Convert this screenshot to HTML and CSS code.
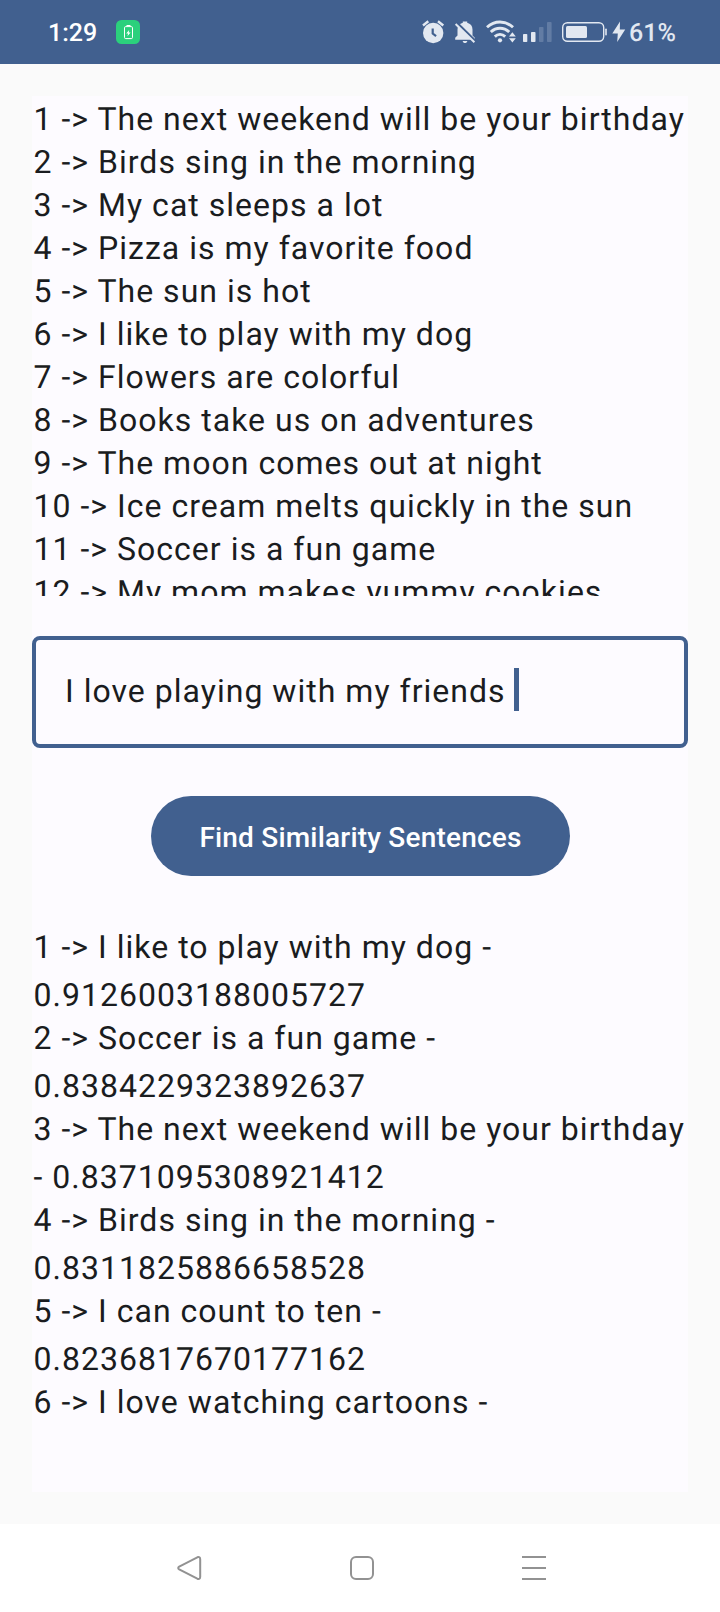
FILE: index.html
```
<!DOCTYPE html>
<html lang="en">
<head>
<meta charset="utf-8">
<title>Find Similarity Sentences</title>
<link rel="stylesheet" href="styles.css">
</head>
<body>
<header class="status-bar">
  <span class="clock">1:29</span>
  <svg class="charge-badge" width="24" height="24" viewBox="0 0 24 24">
    <rect width="24" height="24" rx="5.5" fill="#2bd07c"/>
    <rect x="8.5" y="6.6" width="8" height="12" rx="1.2" fill="none" stroke="#fff"/>
    <path d="M10.5 5.6h4" stroke="#fff" stroke-width="1.2"/>
    <path d="M13.2 10l-3 3.4h1.9l-.7 2.8 3.2-3.6h-1.9z" fill="#fff"/>
  </svg>
  <svg class="status-icons" width="194" height="28" viewBox="418 18 194 28" fill="#e2e8f1">
    <circle cx="433.2" cy="33" r="10.2"/>
    <path d="M423 25.5l5.3-4.2M443.3 25.5l-5.3-4.2" stroke="#e2e8f1" stroke-width="2.4" fill="none"/>
    <path d="M432.7 28.5v5l3.4 2.6" stroke="#41608f" stroke-width="2.2" fill="none"/>
    <path d="M455.2 39.8v-2l2.3-2.3v-6c0-3.7 2-6 5.3-6.8V21.400h4.400v1.300c3.300.8 5.300 3.100 5.300 6.800v6l2.300 2.300v2zM462.700 41h4.600c-.3 2.800-4.300 2.800-4.600 0z"/>
    <path d="M457 22.800l19 18.700" stroke="#41608f" stroke-width="2.400" fill="none"/>
    <path d="M455.600 24l18.800 18.200" stroke="#e2e8f1" stroke-width="2" fill="none"/>
    <g fill="none" stroke="#e2e8f1" stroke-width="2.900">
      <path d="M487 27.300c7.500-7 18.500-7 26 0"/>
      <path d="M490.800 32c5.300-5 13.100-5 18.400 0"/>
      <path d="M494.800 36.600c3-2.900 7.400-2.900 10.400 0"/>
    </g>
    <circle cx="500" cy="40.300" r="2.100"/>
    <path d="M507.500 37.300l4.900-6.300 4.900 6.300-4.900 6.700z" fill="#41608f"/>
    <path d="M509 36.500l3.400-4.300 3.400 4.300zM509 38.200h6.800l-3.400 4.300z"/>
    <rect x="523" y="34" width="4.300" height="8" rx=".8"/>
    <rect x="531" y="32" width="4.500" height="10" rx=".8"/>
    <g fill="#627ca4">
      <rect x="539" y="27" width="4.500" height="15" rx=".8"/>
      <rect x="547" y="22" width="4.600" height="20" rx=".8"/>
    </g>
    <rect x="562.700" y="22.700" width="41" height="18.600" rx="4.800" fill="none" stroke="#e2e8f1" stroke-width="1.400"/>
    <rect x="566" y="26" width="21" height="12" rx="1.500"/>
    <rect x="605.200" y="28.500" width="1.600" height="7" rx=".8"/>
  </svg>
  <svg class="bolt" width="14" height="22" viewBox="0 0 14 22"><path d="M8 .5L.3 12.500h5.500L5.200 21l8-12.500H7.800z" fill="#e2e8f1"/></svg>
  <span class="battery">61%</span>
</header>

<main class="screen">
  <section class="panel">
    <ul class="sentences">
      <li>1 -&gt; The next weekend will be your birthday</li>
      <li>2 -&gt; Birds sing in the morning</li>
      <li>3 -&gt; My cat sleeps a lot</li>
      <li>4 -&gt; Pizza is my favorite food</li>
      <li>5 -&gt; The sun is hot</li>
      <li>6 -&gt; I like to play with my dog</li>
      <li>7 -&gt; Flowers are colorful</li>
      <li>8 -&gt; Books take us on adventures</li>
      <li>9 -&gt; The moon comes out at night</li>
      <li>10 -&gt; Ice cream melts quickly in the sun</li>
      <li>11 -&gt; Soccer is a fun game</li>
      <li>12 -&gt; My mom makes yummy cookies</li>
    </ul>
    <div class="field"><span>I love playing with my friends</span><i class="caret"></i></div>
    <button class="find" type="button">Find Similarity Sentences</button>
    <ul class="results">
      <li>1 -&gt; I like to play with my dog -<br>0.9126003188005727</li>
      <li>2 -&gt; Soccer is a fun game -<br>0.8384229323892637</li>
      <li>3 -&gt; The next weekend will be your birthday<br>- 0.8371095308921412</li>
      <li>4 -&gt; Birds sing in the morning -<br>0.8311825886658528</li>
      <li>5 -&gt; I can count to ten -<br>0.8236817670177162</li>
      <li>6 -&gt; I love watching cartoons -</li>
    </ul>
  </section>
</main>

<nav class="nav-bar">
  <svg width="26" height="26" viewBox="0 0 26 26"><path d="M2.200 11.700L20.300 2.300Q23.200 1.200 23.200 4.200V21.800Q23.200 24.800 20.300 23.700L2.200 14.300Q.2 13 2.200 11.700z"/></svg>
  <svg width="26" height="26" viewBox="0 0 26 26"><rect x="2" y="2" width="22" height="22" rx="5"/></svg>
  <svg width="26" height="26" viewBox="0 0 26 26"><path d="M1 2h24M1 13h24M1 24h24"/></svg>
</nav>
</body>
</html>
```
FILE: styles.css
```
* { box-sizing: border-box; }
body {
  margin: 0;
  height: 1612px;
  display: flex;
  flex-direction: column;
  background: #fafafa;
  color: #1a1c20;
  font-family: Roboto, sans-serif;
  font-size: 32px;
  letter-spacing: 1.02px;
  text-rendering: geometricPrecision;
  overflow: hidden;
}
ul { list-style: none; margin: 0; padding: 0; }
svg { display: block; flex: none; }

.status-bar {
  height: 64px;
  flex: none;
  display: flex;
  align-items: center;
  padding-left: 48px;
  background: #41608f;
  color: #e2e8f1;
  font-size: 25px;
  font-weight: 500;
}
.clock { width: 68px; padding-top: 3px; color: #fff; letter-spacing: 0; }
.status-icons { margin-left: 278px; }
.battery { margin-left: 3px; padding-top: 3px; letter-spacing: 0; }

.screen { flex: 1; padding: 32px; }
.panel {
  height: 1396px;
  display: flex;
  flex-direction: column;
  background: #fdfbff;
}
.sentences {
  height: 500px;
  padding: 2px 0 0 1.5px;
  overflow: hidden;
  line-height: 43px;
  white-space: nowrap;
}
.field {
  height: 112px;
  margin-top: 40px;
  display: flex;
  align-items: center;
  padding: 0 28px 2px 29px;
  border: 4px solid #41608f;
  border-radius: 8px;
}
.caret { width: 4.500px; height: 43px; margin: -3px 0 0 8.500px; background: #41608f; }
.find {
  align-self: center;
  width: 419px;
  height: 80px;
  margin: 48px 0 0 1px;
  padding: 2px 0 0;
  border: 0;
  border-radius: 40px;
  background: #41608f;
  color: #fff;
  font: 500 28px Roboto, sans-serif;
  letter-spacing: 0.2px;
}
.results {
  height: 508px;
  margin-top: 47px;
  padding-left: 1.5px;
  overflow: hidden;
  line-height: 48px;
  white-space: nowrap;
}
.results li { height: 91px; }

.nav-bar {
  height: 88px;
  flex: none;
  display: flex;
  gap: 146px;
  padding: 31px 0 0 177px;
  background: #fff;
  fill: none;
  stroke: #929292;
  stroke-width: 2;
}
```
